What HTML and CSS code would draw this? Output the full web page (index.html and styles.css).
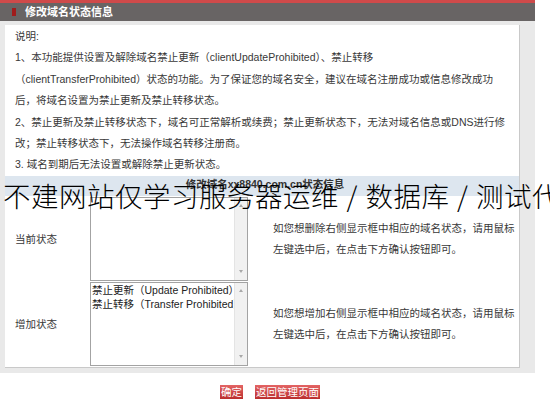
FILE: index.html
```html
<!DOCTYPE html>
<html lang="zh-CN">
<head>
<meta charset="utf-8">
<title>修改域名状态信息</title>
<link rel="stylesheet" href="styles.css">
</head>
<body>
<div class="page">
  <div class="box">
    <div class="box-head"><span class="mark"></span><h2 class="box-title">修改域名状态信息</h2></div>
    <div class="box-body">
      <div class="panel">
        <div class="intro">说明:<br>1、本功能提供设置及解除域名禁止更新（clientUpdateProhibited）、禁止转移<br>（clientTransferProhibited）状态的功能。为了保证您的域名安全，建议在域名注册成功或信息修改成功<br>后，将域名设置为禁止更新及禁止转移状态。<br>2、禁止更新及禁止转移状态下，域名可正常解析或续费；禁止更新状态下，无法对域名信息或DNS进行修<br>改；禁止转移状态下，无法操作域名转移注册商。<br>3. 域名到期后无法设置或解除禁止更新状态。</div>
        <div class="band">修改域名xx8840.com.cn状态信息</div>
        <div class="row row-first">
          <div class="label">当前状态</div>
          <div class="listbox">
            <div class="opts"></div>
            <div class="sb"><span class="arrow-up"></span><span class="arrow-down"></span></div>
          </div>
          <div class="desc">如您想删除右侧显示框中相应的域名状态，请用鼠标<br>左键选中后，在点击下方确认按钮即可。</div>
        </div>
        <div class="row row-last">
          <div class="label">增加状态</div>
          <div class="listbox">
            <div class="opts">
              <div class="opt">禁止更新（Update Prohibited）</div>
              <div class="opt">禁止转移（Transfer Prohibited）</div>
            </div>
            <div class="sb"><span class="arrow-up"></span><span class="arrow-down"></span></div>
          </div>
          <div class="desc">如您想增加右侧显示框中相应的域名状态，请用鼠标<br>左键选中后，在点击下方确认按钮即可。</div>
        </div>
      </div>
    </div>
  </div>
  <div class="actions">
    <button class="btn" type="button">确定</button>
    <button class="btn" type="button">返回管理页面</button>
  </div>
  <div class="watermark">不建网站仅学习服务器运维 / 数据库 / 测试代码</div>
</div>
</body>
</html>
```
FILE: styles.css
```css
html, body {
  margin: 0;
  padding: 0;
  overflow: hidden;
  background: #fff;
}
body {
  font-family: "Liberation Sans", "Noto Sans CJK SC", sans-serif;
  font-size: 10.5px;
  color: #383838;
}
.page {
  position: relative;
  width: 550px;
  height: 410px;
  overflow: hidden;
}
.box {
  width: 535px;
}
.box-head {
  height: 18px;
  border-top: 3px solid #cf4a4a;
  background: #686464;
  display: flex;
  align-items: center;
  padding-left: 12px;
}
.mark {
  width: 4px;
  height: 8px;
  background: #a01c1c;
  margin-right: 9px;
}
.box-title {
  margin: 0;
  font-size: 11px;
  font-weight: bold;
  color: #fff;
  line-height: 18px;
}
.box-body {
  background: #e9e9e9;
  padding: 4px 15px 5px 5px;
}
.panel {
  background: #fff;
  border-right: 1px solid #c9c9c9;
  border-bottom: 1px solid #c9c9c9;
}
.intro {
  padding: 1px 0 0 10px;
  line-height: 21.4px;
  white-space: nowrap;
}
.band {
  background: #dde6ef;
  height: 20px;
  line-height: 16px;
  text-align: center;
  font-weight: bold;
  color: #333;
  padding-left: 6px;
}
.row {
  display: grid;
  grid-template-columns: 85px 158px 1fr;
  align-items: center;
}
.row-first {
  padding-top: 1px;
  padding-bottom: 1px;
}
.row-last {
  padding-bottom: 1px;
}
.label {
  padding-left: 10px;
}
.listbox {
  height: 84px;
  box-sizing: border-box;
  border: 1px solid #a3a3a3;
  display: flex;
  background: #fff;
}
.opts {
  flex: 1;
  overflow: hidden;
  white-space: nowrap;
  padding: 0 0 0 1px;
  line-height: 14px;
  color: #222;
}
.sb {
  width: 12px;
  background: #f1f1f1;
  border-left: 1px solid #e4e4e4;
  display: flex;
  flex-direction: column;
  justify-content: space-between;
  align-items: center;
  padding: 6px 0 7px;
}
.arrow-up,
.arrow-down {
  width: 0;
  height: 0;
  border-left: 2.5px solid transparent;
  border-right: 2.5px solid transparent;
}
.arrow-up {
  border-bottom: 3px solid #a8a8a8;
}
.arrow-down {
  border-top: 3px solid #a8a8a8;
}
.desc {
  padding-left: 25px;
  line-height: 21px;
  white-space: nowrap;
}
.actions {
  width: 540px;
  display: flex;
  justify-content: center;
  gap: 12px;
  margin-top: 12px;
}
.btn {
  height: 14px;
  padding: 0 1px;
  border: none;
  background: linear-gradient(#e36464, #bb2e2e);
  color: #fff;
  font-family: "Noto Sans CJK SC", sans-serif;
  font-size: 10.5px;
  line-height: 14px;
}
.watermark {
  position: absolute;
  left: 3px;
  top: 178px;
  font-family: "Noto Sans CJK SC", sans-serif;
  font-weight: 300;
  font-size: 27.5px;
  letter-spacing: 0.5px;
  word-spacing: 1px;
  line-height: 34px;
  color: #000;
  white-space: nowrap;
  pointer-events: none;
}
```
